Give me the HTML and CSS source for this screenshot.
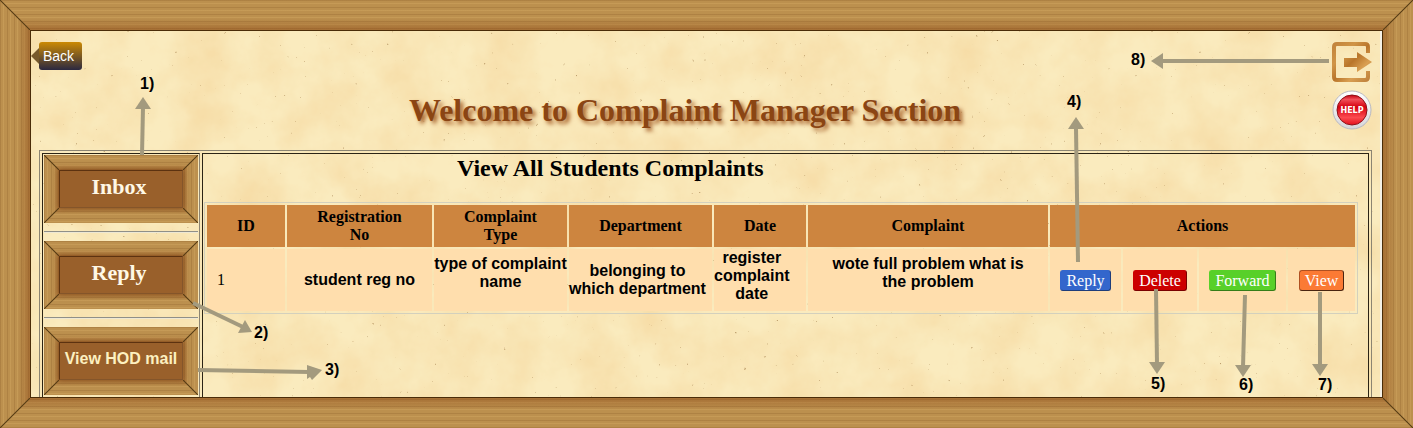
FILE: index.html
```html
<!DOCTYPE html>
<html lang="en">
<head>
<meta charset="utf-8">
<title>Complaint Manager</title>
<link rel="stylesheet" href="styles.css">
</head>
<body>
<div class="frame wood">
  <div class="sheet">
    <svg class="paper" aria-hidden="true">
      <filter id="blotches" x="0" y="0" width="100%" height="100%" color-interpolation-filters="sRGB">
        <feTurbulence type="fractalNoise" baseFrequency="0.02" numOctaves="6" seed="4"/>
        <feColorMatrix values="0 0 0 0 0.95  0 0 0 0 0.8  0 0 0 0 0.55  0.8 0 0 0 -0.25"/>
      </filter>
      <filter id="specks" x="0" y="0" width="100%" height="100%" color-interpolation-filters="sRGB">
        <feTurbulence type="fractalNoise" baseFrequency="0.25" numOctaves="2" seed="9"/>
        <feColorMatrix values="0 0 0 0 0.6  0 0 0 0 0.45  0 0 0 0 0.25  5 0 0 0 -3.95"/>
      </filter>
      <rect width="100%" height="100%" filter="url(#blotches)"/>
      <rect width="100%" height="100%" filter="url(#specks)"/>
    </svg>

    <header class="header">
      <a class="back" href="#back">Back</a>
      <h1 class="title">Welcome to Complaint Manager Section</h1>
      <nav class="tools">
        <a class="tool" href="#logout" aria-label="Log out">
          <svg width="40" height="40" viewBox="0 0 40 40">
            <defs>
              <linearGradient id="oak" gradientUnits="userSpaceOnUse" x1="0" y1="0" x2="40" y2="40">
                <stop offset="0" stop-color="#c0813a"/><stop offset=".3" stop-color="#d09446"/>
                <stop offset=".5" stop-color="#b9752a"/><stop offset=".7" stop-color="#d99f52"/>
                <stop offset="1" stop-color="#b97a35"/>
              </linearGradient>
            </defs>
            <path fill="none" stroke="url(#oak)" stroke-width="4" d="M36 11V5Q36 2 33 2H5Q2 2 2 5V35Q2 38 5 38H33Q36 38 36 35V29"/>
            <path fill="url(#oak)" d="M12 16H25V10L40 20L25 30V25H12Z"/>
          </svg>
        </a>
        <a class="tool" href="#help" aria-label="Help">
          <svg width="40" height="40" viewBox="0 0 40 40">
            <defs>
              <linearGradient id="rim" x1="0" y1="0" x2="0" y2="1">
                <stop offset="0" stop-color="#ffffff"/><stop offset="1" stop-color="#d6d6da"/>
              </linearGradient>
              <linearGradient id="red" x1="0" y1="0" x2="0" y2="1">
                <stop offset="0" stop-color="#c4000e"/><stop offset=".15" stop-color="#f0505a"/>
                <stop offset=".4" stop-color="#d6000f"/><stop offset=".75" stop-color="#fb4a50"/>
                <stop offset="1" stop-color="#e3101c"/>
              </linearGradient>
            </defs>
            <circle cx="20" cy="20" r="19" fill="url(#rim)" stroke="#b9b9c0"/>
            <circle cx="20" cy="20" r="15" fill="url(#red)" stroke="#8e1018"/>
            <text class="help-text" x="20" y="23" text-anchor="middle">HELP</text>
          </svg>
        </a>
      </nav>
    </header>

    <div class="panel">
      <nav class="menu">
        <a class="menu-item wood" href="#inbox"><span class="plate">Inbox</span></a>
        <hr class="rule">
        <a class="menu-item wood" href="#reply"><span class="plate">Reply</span></a>
        <hr class="rule">
        <a class="menu-item wood" href="#hod"><span class="plate plate-small">View HOD mail</span></a>
      </nav>

      <main class="content">
        <h2 class="heading">View All Students Complaints</h2>
        <table class="complaints">
          <colgroup>
            <col class="c-id"><col class="c-reg"><col class="c-type"><col class="c-dept"><col class="c-date">
            <col><col class="c-reply"><col class="c-delete"><col class="c-forward"><col class="c-view">
          </colgroup>
          <thead>
            <tr>
              <th scope="col">ID</th>
              <th scope="col">Registration<br>No</th>
              <th scope="col">Complaint<br>Type</th>
              <th scope="col">Department</th>
              <th scope="col">Date</th>
              <th scope="col">Complaint</th>
              <th scope="colgroup" colspan="4">Actions</th>
            </tr>
          </thead>
          <tbody>
            <tr>
              <td class="id">1</td>
              <td class="note">student reg no</td>
              <td class="note note-upper"><div class="over">type of complaint<br>name</div></td>
              <td class="note"><div class="start">belonging to<br>which department</div></td>
              <td class="note note-top"><div class="start">register<br>complaint<br>date</div></td>
              <td class="note note-upper">wote full problem what is<br>the problem</td>
              <td class="action"><button class="btn btn-reply" type="button">Reply</button></td>
              <td class="action"><button class="btn btn-delete" type="button">Delete</button></td>
              <td class="action"><button class="btn btn-forward" type="button">Forward</button></td>
              <td class="action"><button class="btn btn-view" type="button">View</button></td>
            </tr>
          </tbody>
        </table>
      </main>
    </div>
  </div>

  <svg class="callouts" width="1413" height="428" viewBox="0 0 1413 428">
    <g class="line">
      <path d="M142 155L143 107"/>
      <path d="M193 303L243 327"/>
      <path d="M198 370L309 372"/>
      <path d="M1078 262L1076 128"/>
      <path d="M1156 289L1157 364"/>
      <path d="M1245 295L1243 367"/>
      <path d="M1320 292V366"/>
      <path d="M1329 61H1162"/>
    </g>
    <g class="head">
      <path d="M143 97L151 109H135Z"/>
      <path d="M252 332L238 333L245 320Z"/>
      <path d="M322 370L307 365V379L310 377L312 380Z"/>
      <path d="M1076 117L1084 129H1068Z"/>
      <path d="M1157 374L1165 362H1149Z"/>
      <path d="M1243 377L1251 365H1235Z"/>
      <path d="M1320 376L1328 364H1312Z"/>
      <path d="M1151 61L1163 53V69Z"/>
    </g>
    <g class="label">
      <text x="140" y="89">1)</text>
      <text x="254" y="338">2)</text>
      <text x="325" y="375">3)</text>
      <text x="1067" y="107">4)</text>
      <text x="1151" y="389">5)</text>
      <text x="1239" y="390">6)</text>
      <text x="1318" y="390">7)</text>
      <text x="1131" y="65">8)</text>
    </g>
  </svg>
</div>
</body>
</html>
```
FILE: styles.css
```css
* {
  box-sizing: border-box;
}

body {
  margin: 0;
  font-family: "Liberation Serif", "Times New Roman", serif;
  font-size: 16px;
  line-height: 18px;
  color: #000;
}

/* Mitred wooden border: vertical grain on the element, horizontal grain on top of it */
.wood {
  --edge: 30px;
  --grain: rgba(110, 65, 20, .18) 0 1px, transparent 1px 3px, rgba(235, 195, 120, .2) 3px 4px, transparent 4px 7px;
  --shade: transparent calc(var(--edge) * .6), rgba(140, 72, 22, .45) var(--edge), rgba(140, 72, 22, .45) calc(100% - var(--edge)), transparent calc(100% - var(--edge) * .6);
  position: relative;
  padding: var(--edge);
  background:
    linear-gradient(to right, var(--shade)),
    repeating-linear-gradient(to right, var(--grain)),
    #bc904e;
}

.wood::before,
.wood::after {
  content: "";
  position: absolute;
  inset: 0;
}

.wood::before {
  background:
    linear-gradient(to bottom, var(--shade)),
    repeating-linear-gradient(to bottom, var(--grain)),
    #bc904e;
  clip-path: polygon(0 0, 100% 0, calc(100% - var(--edge)) var(--edge), calc(100% - var(--edge)) calc(100% - var(--edge)), 100% 100%, 0 100%, var(--edge) calc(100% - var(--edge)), var(--edge) var(--edge));
}

.wood::after {
  --seam: transparent calc(50% - 1px), #5a3f16 50%, transparent calc(50% + 1px);
  --down: linear-gradient(to top right, var(--seam));
  --up: linear-gradient(to bottom right, var(--seam));
  background:
    var(--down) left top / var(--edge) var(--edge) no-repeat,
    var(--up) right top / var(--edge) var(--edge) no-repeat,
    var(--up) left bottom / var(--edge) var(--edge) no-repeat,
    var(--down) right bottom / var(--edge) var(--edge) no-repeat;
}

.frame {
  height: 100vh;
}

.sheet {
  position: relative;
  z-index: 1;
  height: 100%;
  padding: 0 10px 0 8px;
  overflow: hidden;
  display: flex;
  flex-direction: column;
  border: 1px solid #4a2c08;
  box-shadow: inset -2px 0 #f6f1e6;
  background: #faebbe;
}

.paper {
  position: absolute;
  inset: 0 2px 0 0;
  width: calc(100% - 2px);
  height: 100%;
}

.header {
  position: relative;
  flex: none;
  display: grid;
  grid-template-columns: 43px 1fr 84px;
  height: 119px;
  padding-top: 11px;
}

.back {
  position: relative;
  height: 28px;
  padding: 0 4px;
  border-radius: 3px;
  background: linear-gradient(#cc8a04, #2b2840);
  color: #fff;
  font: 14px/28px "Liberation Sans", Arial, sans-serif;
  text-decoration: none;
}

.back::before {
  content: "";
  position: absolute;
  left: -8px;
  top: 6px;
  border: 8px solid transparent;
  border-left: 0;
  border-right-color: #77592c;
}

.title {
  margin: 50px 0 0;
  color: #8b4513;
  font-size: 32px;
  line-height: 36px;
  text-align: center;
  text-shadow: 3px 3px 4px #a8632c;
}

.tools {
  display: flex;
  flex-direction: column;
  align-items: flex-end;
  gap: 8px;
}

.tool {
  height: 40px;
}

.help-text {
  fill: #fff;
  font: bold 8px "DejaVu Sans", sans-serif;
}

.panel {
  position: relative;
  flex: none;
  display: flex;
  gap: 2px;
  min-height: 100%;
  padding: 2px;
  border: 1px solid #8b8472;
}

.menu {
  flex: none;
  width: 158px;
  padding: 1px;
  border: 1px solid #2b2415;
  border-right-color: #8b8472;
}

.menu-item {
  --edge: 15px;
  display: block;
  height: 68px;
  text-decoration: none;
}

.plate {
  position: relative;
  z-index: 1;
  display: flex;
  align-items: center;
  justify-content: center;
  height: 100%;
  padding: 0 4px 4px 0;
  border: 1px solid #5c3210;
  border-color: #5c3210 #84552a #84552a #5c3210;
  background: #99602b;
  box-shadow: 0 0 6px rgba(110, 55, 15, .5);
  color: #fff8e6;
  font-size: 22px;
  font-weight: bold;
  line-height: 24px;
  white-space: nowrap;
}

.plate-small {
  padding-right: 0;
  color: #fdf0c0;
  font-family: "Liberation Sans", Arial, sans-serif;
  font-size: 16px;
}

.rule {
  height: 2px;
  margin: 8px 0;
  border: 0;
  border-top: 1px solid #8f8f88;
  border-bottom: 1px solid #eee8d4;
}

.content {
  flex: 1;
  padding: 1px 10px 0 1px;
  border: 1px solid #2b2415;
}

.heading {
  margin: 0 0 20px;
  padding-left: 253px;
  font-size: 24px;
  line-height: 27px;
}

.complaints {
  width: 100%;
  table-layout: fixed;
  border: 1px solid #d3d0bd;
  border-spacing: 2px;
}

.c-id { width: 78px; }
.c-reg { width: 145px; }
.c-type { width: 133px; }
.c-dept { width: 143px; }
.c-date { width: 92px; }
.c-reply { width: 71px; }
.c-delete { width: 74px; }
.c-forward { width: 87px; }
.c-view { width: 67px; }

th {
  height: 42px;
  padding: 0;
  background: #cd853f;
}

td {
  height: 62px;
  padding: 0;
  background: #ffdead;
}

.id {
  padding-left: 10px;
}

.note {
  font-family: "Liberation Sans", Arial, sans-serif;
  font-weight: bold;
  text-align: center;
  white-space: nowrap;
}

.note-upper {
  padding-top: 6px;
  vertical-align: top;
}

.note-top {
  vertical-align: top;
}

.over {
  display: flex;
  flex-direction: column;
  align-items: center;
}

.start {
  width: max-content;
}

.action {
  text-align: center;
}

.btn {
  padding: 0 5px;
  border: 1px solid;
  border-radius: 3px;
  color: #fff;
  font: 16px/19px "Liberation Serif", "Times New Roman", serif;
}

.btn-reply { background: #3366cc; border-color: #3366cc #1f3d7a #1f3d7a #3366cc; }
.btn-delete { background: #cc0000; border-color: #cc0000 #7a0000 #7a0000 #cc0000; }
.btn-forward { background: #58d029; border-color: #58d029 #357d18 #357d18 #58d029; }
.btn-view { background: #fb7a34; border-color: #b05020 #4a2410 #4a2410 #b05020; }

.callouts {
  position: absolute;
  z-index: 2;
  left: 0;
  top: 0;
  pointer-events: none;
}

.line {
  stroke: #a39a7e;
  stroke-width: 4;
  fill: none;
}

.head {
  fill: #a39a7e;
}

.label {
  font: bold 16px "Liberation Sans", Arial, sans-serif;
}
```
